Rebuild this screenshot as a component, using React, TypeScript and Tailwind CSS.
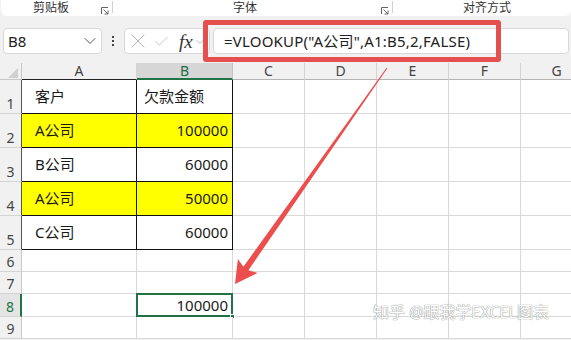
import React from 'react';
import { X, Check, ChevronDown } from 'lucide-react';

const FONT = "font-['Noto_Sans','Noto_Sans_CJK_SC',sans-serif]";

function Launcher() {
  return (
    <svg width="8" height="8" viewBox="0 0 8 8" className="shrink-0">
      <path d="M0.5 7 V0.5 H7" stroke="#666" strokeWidth="1" fill="none" />
      <path d="M2.5 2.5 L7 7 M7 3.5 V7 H3.5" stroke="#666" strokeWidth="1" fill="none" />
    </svg>
  );
}

type RowDef = {
  n: number;
  h: string;
  a?: string;
  b?: string;
  bLeft?: boolean;
  yellow?: boolean;
  table?: boolean;
  selected?: boolean;
};

const rows: RowDef[] = [
  { n: 1, h: 'h-[34px]', a: '客户', b: '欠款金额', bLeft: true, table: true },
  { n: 2, h: 'h-[34px]', a: 'A公司', b: '100000', yellow: true, table: true },
  { n: 3, h: 'h-[34px]', a: 'B公司', b: '60000', table: true },
  { n: 4, h: 'h-[34px]', a: 'A公司', b: '50000', yellow: true, table: true },
  { n: 5, h: 'h-[34px]', a: 'C公司', b: '60000', table: true },
  { n: 6, h: 'h-[22px]' },
  { n: 7, h: 'h-[22px]' },
  { n: 8, h: 'h-[23px]', b: '100000', selected: true },
  { n: 9, h: 'h-[22px]' },
];

const restCols = ['C', 'D', 'E', 'F', 'G'];

export default function App() {
  return (
    <div className={`relative w-[571px] h-[340px] overflow-hidden bg-[#f1f1f1] ${FONT} text-[#1a1a1a]`}>
      {/* Ribbon */}
      <div className="ml-[1px] h-[16px] bg-white rounded-b-[6px] flex items-start pt-[1px] text-[12px] leading-[14px] text-[#333]">
        <div className="w-[111px] h-[14px] flex items-center">
          <span className="ml-[32px]">剪贴板</span>
          <span className="ml-auto mr-[3px] mt-[5px]"><Launcher /></span>
        </div>
        <div className="w-px h-[12px] bg-[#d0d0d0]" />
        <div className="w-[279px] h-[14px] flex items-center">
          <span className="ml-[120px]">字体</span>
          <span className="ml-auto mr-[3px] mt-[5px]"><Launcher /></span>
        </div>
        <div className="w-px h-[12px] bg-[#d0d0d0]" />
        <div className="h-[14px] flex items-center">
          <span className="ml-[70px]">对齐方式</span>
        </div>
      </div>

      {/* Formula bar */}
      <div className="mt-[12px] h-[26px] flex items-stretch">
        <div className="ml-[3px] w-[99px] bg-white border border-[#d8d8d8] rounded-[4px] flex items-center justify-between pl-[4px] pr-[1px]">
          <span className="text-[15px] leading-none text-[#222]">B8</span>
          <ChevronDown size={20} strokeWidth={1.2} color="#555" />
        </div>
        <div className="w-[22px] flex flex-col items-center justify-center gap-[2px]">
          <div className="w-[2px] h-[2px] bg-[#444]" />
          <div className="w-[2px] h-[2px] bg-[#444]" />
          <div className="w-[2px] h-[2px] bg-[#444]" />
        </div>
        <div className="w-[86px] bg-white border border-[#d8d8d8] rounded-[4px] flex items-center pl-[1px]">
          <X size={24} strokeWidth={1} color="#b5b5b5" />
          <Check size={17} strokeWidth={1.1} color="#b5b5b5" className="ml-[3px]" />
          <span className="ml-[9px] font-['Liberation_Serif',serif] italic text-[19px] leading-none text-[#333]">fx</span>
          <ChevronDown size={12} strokeWidth={1.2} color="#888" className="ml-[1px] mt-[2px]" />
        </div>
        <div className="ml-[3px] w-[356px] bg-white border border-[#d8d8d8] rounded-[4px] flex items-center pl-[10px]">
          <span className="text-[15px] leading-none tracking-[0.2px] text-[#222] whitespace-pre">=VLOOKUP("A公司",A1:B5,2,FALSE)</span>
        </div>
      </div>

      {/* Grid */}
      <div className="mt-[9px] flex flex-col">
        {/* Column header */}
        <div className="flex h-[17px] text-[14px] text-[#444] leading-none">
          <div className="w-[22px] shrink-0 border-r border-b border-[#c8c8c8] relative">
            <svg width="22" height="17" viewBox="0 0 22 17" className="absolute inset-0">
              <polygon points="18,5 18,15 8,15" fill="#d0d0d0" />
            </svg>
          </div>
          <div className="w-[115px] shrink-0 border-r border-[#d4d4d4] border-b border-b-[#222] flex items-center justify-center">A</div>
          <div className="w-[96px] shrink-0 bg-[#d6d6d6] text-[#1f6b41] border-r border-[#c4c4c4] border-b-2 border-b-[#217346] flex items-center justify-center">B</div>
          {restCols.map((c) => (
            <div key={c} className="w-[72px] shrink-0 border-r border-[#d4d4d4] border-b border-b-[#b4b4b4] flex items-center justify-center">
              {c}
            </div>
          ))}
        </div>

        {rows.map((r) => (
          <div key={r.n} className={`flex ${r.h}`}>
            <div
              className={`w-[22px] shrink-0 border-b border-[#d4d4d4] flex items-end justify-center pb-[2px] text-[14px] leading-none ${
                r.selected
                  ? 'border-r-2 border-r-[#217346] text-[#217346] bg-[#e4e4e4]'
                  : r.table
                  ? 'border-r border-r-[#555] text-[#444]'
                  : 'border-r border-r-[#c8c8c8] text-[#444]'
              }`}
            >
              {r.n}
            </div>
            <div
              className={`w-[115px] shrink-0 border-r border-b flex items-center pl-[13px] text-[15px] leading-none ${
                r.table ? 'border-[#111]' : 'border-[#d9d9d9]'
              } ${r.yellow ? 'bg-[#ffff00]' : 'bg-white'}`}
            >
              {r.a}
            </div>
            <div
              className={`relative w-[96px] shrink-0 border-r border-b flex items-center text-[15px] leading-none ${
                r.bLeft ? 'justify-start pl-[7px]' : 'justify-end pr-[4px]'
              } ${r.table ? 'border-[#111]' : 'border-[#d9d9d9]'} ${r.yellow ? 'bg-[#ffff00]' : 'bg-white'}`}
            >
              {r.b}
              {r.selected && (
                <>
                  <div className="absolute -left-px -top-px -right-px -bottom-px border-2 border-[#217346]" />
                  <div className="absolute -right-[3px] -bottom-[3px] w-[5px] h-[5px] bg-[#217346] border border-white" />
                </>
              )}
            </div>
            {restCols.map((c) => (
              <div key={c} className="w-[72px] shrink-0 border-r border-b border-[#d9d9d9] bg-white" />
            ))}
          </div>
        ))}
      </div>

      {/* Annotation: red box */}
      <div className="absolute left-[203px] top-[20px] w-[298px] h-[42px] border-[5px] border-[#e5504f] rounded-[3px]" />

      {/* Annotation: arrow */}
      <svg className="absolute inset-0 pointer-events-none" width="571" height="340" viewBox="0 0 571 340">
        <polygon
          points="387.4,68.3 248.4,270.2 257.5,272.9 235,284 237.9,259.1 243.4,266.8 386.6,67.7"
          fill="#ec4d4d"
        />
      </svg>

      {/* Watermark */}
      <div className="absolute left-[373px] top-[302px] text-[16px] leading-[20px] text-white whitespace-pre [text-shadow:0_0_1px_#777,0_0_1px_#aaa]">
        知乎 @跟我学EXCEL图表
      </div>
    </div>
  );
}
